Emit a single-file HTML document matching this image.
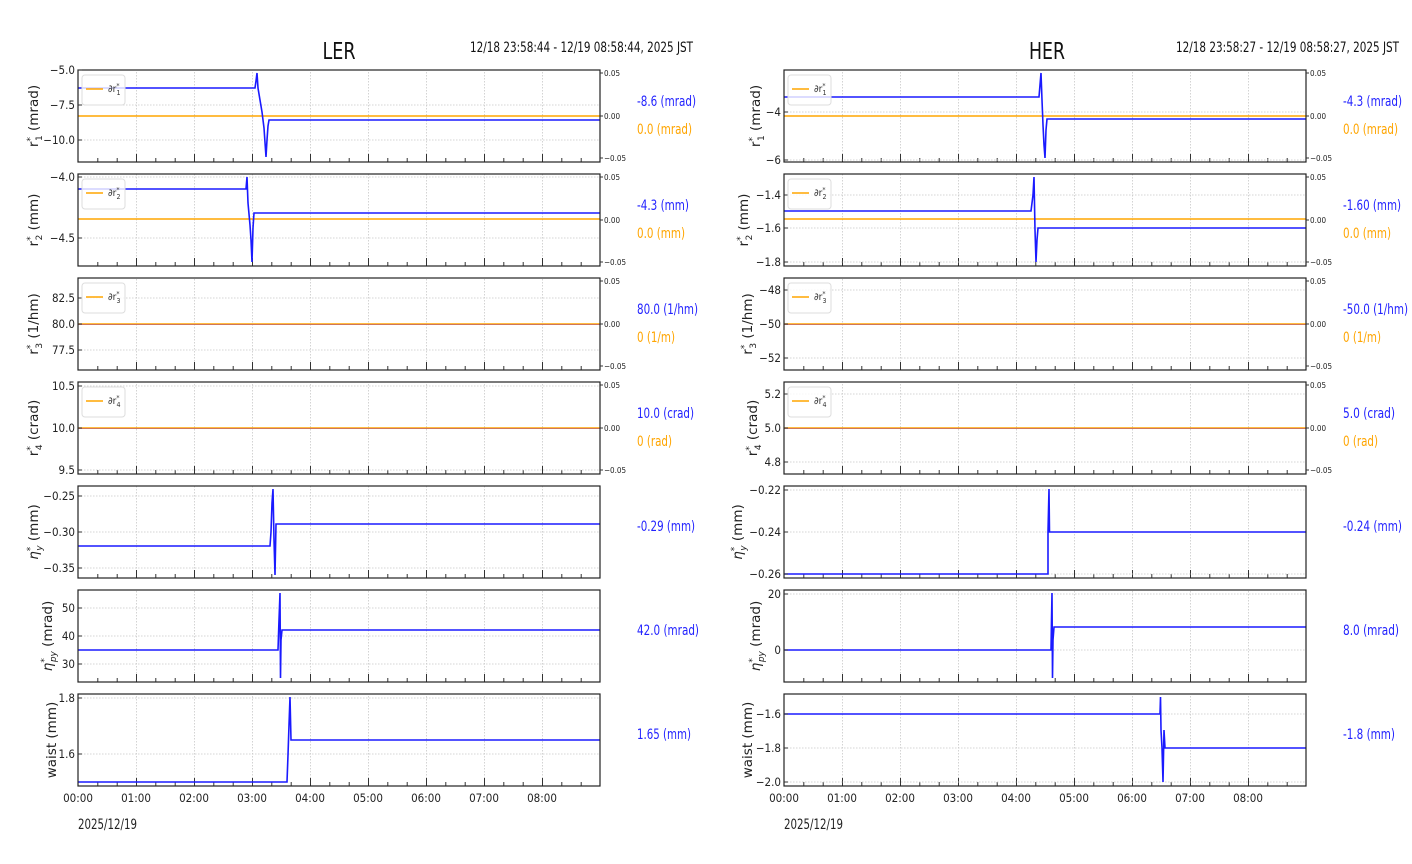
<!DOCTYPE html>
<html><head><meta charset="utf-8"><style>
html,body{margin:0;padding:0;background:#fff;}
svg{display:block;}
.t{font-family:"DejaVu Sans Condensed","DejaVu Sans","Liberation Sans",sans-serif;font-stretch:condensed;fill:#222;}
.tk{font-size:11.5px;}
.tk9{font-size:8px;}
.yl{font-family:"DejaVu Sans","Liberation Sans",sans-serif;font-size:13.5px;fill:#222;}
.vb{font-size:14px;fill:#2222ff;}
.vo{font-size:14px;fill:#ffa500;}
.ax{fill:none;stroke:#222;stroke-width:1.2;}
.g{stroke:#c8c8c8;stroke-width:0.8;stroke-dasharray:1.5,1.5;}
.b{fill:none;stroke:#1a1aff;stroke-width:1.6;}
.o{stroke:#ffa500;stroke-width:1.4;}
.tm{stroke:#333;stroke-width:1;}
.lg{fill:#fff;fill-opacity:0.8;stroke:#ddd;stroke-width:1;}
.ls{font-size:10px;fill:#333;}
</style></head><body>
<svg width="1412" height="864" viewBox="0 0 1412 864" xmlns="http://www.w3.org/2000/svg">
<defs>
<pattern id="vgL" patternUnits="userSpaceOnUse" x="78" y="0" width="58" height="864"><line x1="0.5" y1="0" x2="0.5" y2="864" class="g"/></pattern>
<pattern id="vgR" patternUnits="userSpaceOnUse" x="784" y="0" width="58" height="864"><line x1="0.5" y1="0" x2="0.5" y2="864" class="g"/></pattern>
<pattern id="tkL" patternUnits="userSpaceOnUse" x="78" y="0" width="58" height="864"><line x1="0.5" y1="856" x2="0.5" y2="864" class="tm"/><line x1="19.8" y1="860" x2="19.8" y2="864" class="tm"/><line x1="39.2" y1="860" x2="39.2" y2="864" class="tm"/></pattern>
<pattern id="tkR" patternUnits="userSpaceOnUse" x="784" y="0" width="58" height="864"><line x1="0.5" y1="856" x2="0.5" y2="864" class="tm"/><line x1="19.8" y1="860" x2="19.8" y2="864" class="tm"/><line x1="39.2" y1="860" x2="39.2" y2="864" class="tm"/></pattern>
</defs>

<!-- Titles -->
<text x="339" y="59" text-anchor="middle" class="t" style="font-size:23px;fill:#111" textLength="33" lengthAdjust="spacingAndGlyphs">LER</text>
<text x="470" y="52" class="t" style="font-size:14px;fill:#111" textLength="223" lengthAdjust="spacingAndGlyphs">12/18 23:58:44 - 12/19 08:58:44, 2025 JST</text>
<text x="1047" y="59" text-anchor="middle" class="t" style="font-size:23px;fill:#111" textLength="36" lengthAdjust="spacingAndGlyphs">HER</text>
<text x="1176" y="52" class="t" style="font-size:14px;fill:#111" textLength="223" lengthAdjust="spacingAndGlyphs">12/18 23:58:27 - 12/19 08:58:27, 2025 JST</text>

<!-- vertical grids -->
<g>
<rect x="79" y="70" width="520" height="92" fill="url(#vgL)"/>
<rect x="79" y="174" width="520" height="92" fill="url(#vgL)"/>
<rect x="79" y="278" width="520" height="92" fill="url(#vgL)"/>
<rect x="79" y="382" width="520" height="92" fill="url(#vgL)"/>
<rect x="79" y="486" width="520" height="92" fill="url(#vgL)"/>
<rect x="79" y="590" width="520" height="92" fill="url(#vgL)"/>
<rect x="79" y="694" width="520" height="92" fill="url(#vgL)"/>
<rect x="785" y="70" width="520" height="92" fill="url(#vgR)"/>
<rect x="785" y="174" width="520" height="92" fill="url(#vgR)"/>
<rect x="785" y="278" width="520" height="92" fill="url(#vgR)"/>
<rect x="785" y="382" width="520" height="92" fill="url(#vgR)"/>
<rect x="785" y="486" width="520" height="92" fill="url(#vgR)"/>
<rect x="785" y="590" width="520" height="92" fill="url(#vgR)"/>
<rect x="785" y="694" width="520" height="92" fill="url(#vgR)"/>
</g>
<!-- bottom ticks -->
<g>
<svg x="0" y="154" width="1412" height="8" viewBox="0 856 1412 8"><rect x="79" y="856" width="520" height="8" fill="url(#tkL)"/><rect x="785" y="856" width="520" height="8" fill="url(#tkR)"/></svg>
<svg x="0" y="258" width="1412" height="8" viewBox="0 856 1412 8"><rect x="79" y="856" width="520" height="8" fill="url(#tkL)"/><rect x="785" y="856" width="520" height="8" fill="url(#tkR)"/></svg>
<svg x="0" y="362" width="1412" height="8" viewBox="0 856 1412 8"><rect x="79" y="856" width="520" height="8" fill="url(#tkL)"/><rect x="785" y="856" width="520" height="8" fill="url(#tkR)"/></svg>
<svg x="0" y="466" width="1412" height="8" viewBox="0 856 1412 8"><rect x="79" y="856" width="520" height="8" fill="url(#tkL)"/><rect x="785" y="856" width="520" height="8" fill="url(#tkR)"/></svg>
<svg x="0" y="570" width="1412" height="8" viewBox="0 856 1412 8"><rect x="79" y="856" width="520" height="8" fill="url(#tkL)"/><rect x="785" y="856" width="520" height="8" fill="url(#tkR)"/></svg>
<svg x="0" y="674" width="1412" height="8" viewBox="0 856 1412 8"><rect x="79" y="856" width="520" height="8" fill="url(#tkL)"/><rect x="785" y="856" width="520" height="8" fill="url(#tkR)"/></svg>
<svg x="0" y="778" width="1412" height="8" viewBox="0 856 1412 8"><rect x="79" y="856" width="520" height="8" fill="url(#tkL)"/><rect x="785" y="856" width="520" height="8" fill="url(#tkR)"/></svg>
</g>

<!-- horizontal grids -->
<g class="g">
<line x1="78" x2="600" y1="105" y2="105"/><line x1="78" x2="600" y1="140" y2="140"/>
<line x1="78" x2="600" y1="238" y2="238"/><line x1="78" x2="600" y1="177" y2="177"/>
<line x1="78" x2="600" y1="298" y2="298"/><line x1="78" x2="600" y1="350" y2="350"/>
<line x1="78" x2="600" y1="386" y2="386"/><line x1="78" x2="600" y1="470" y2="470"/>
<line x1="78" x2="600" y1="496" y2="496"/><line x1="78" x2="600" y1="532" y2="532"/><line x1="78" x2="600" y1="568" y2="568"/>
<line x1="78" x2="600" y1="608" y2="608"/><line x1="78" x2="600" y1="636" y2="636"/><line x1="78" x2="600" y1="664" y2="664"/>
<line x1="78" x2="600" y1="698" y2="698"/><line x1="78" x2="600" y1="754" y2="754"/>
<line x1="784" x2="1306" y1="112" y2="112"/><line x1="784" x2="1306" y1="160" y2="160"/>
<line x1="784" x2="1306" y1="195" y2="195"/><line x1="784" x2="1306" y1="228" y2="228"/><line x1="784" x2="1306" y1="262" y2="262"/>
<line x1="784" x2="1306" y1="290" y2="290"/><line x1="784" x2="1306" y1="358" y2="358"/>
<line x1="784" x2="1306" y1="394" y2="394"/><line x1="784" x2="1306" y1="462" y2="462"/>
<line x1="784" x2="1306" y1="490" y2="490"/><line x1="784" x2="1306" y1="532" y2="532"/><line x1="784" x2="1306" y1="574" y2="574"/>
<line x1="784" x2="1306" y1="594" y2="594"/><line x1="784" x2="1306" y1="650" y2="650"/>
<line x1="784" x2="1306" y1="714" y2="714"/><line x1="784" x2="1306" y1="748" y2="748"/><line x1="784" x2="1306" y1="782" y2="782"/>
</g>

<!-- data LEFT -->
<line x1="78" x2="600" y1="116" y2="116" class="o"/>
<polyline class="b" points="78,88 255,88 256,81 257,73 258,88 260,100 262,112 264,128 266,157 267,140 268,126 269,120 600,120"/>
<line x1="78" x2="600" y1="219" y2="219" class="o"/>
<polyline class="b" points="78,189 246,189 247,177 248,203 250,225 251,240 252,262 253,228 254,213 600,213"/>
<line x1="78" x2="600" y1="324" y2="324" class="o"/><line x1="78" x2="600" y1="324.5" y2="324.5" stroke="#c06060" stroke-width="0.8"/>
<line x1="78" x2="600" y1="428" y2="428" class="o"/><line x1="78" x2="600" y1="428.5" y2="428.5" stroke="#c06060" stroke-width="0.8"/>
<polyline class="b" points="78,546 270,546 271,532 272,503 273,489 274,540 275,575 276,524 600,524"/>
<polyline class="b" points="78,650 278,650 279,620 280,593 280.5,678 281,640 282,630 600,630"/>
<polyline class="b" points="78,782 287,782 288,755 289,725 290,697 291,740 600,740"/>

<!-- data RIGHT -->
<line x1="784" x2="1306" y1="116" y2="116" class="o"/>
<polyline class="b" points="784,97 1039,97 1040,85 1041,73 1042,100 1043,125 1044,145 1045,158 1046,130 1047,119 1306,119"/>
<line x1="784" x2="1306" y1="219" y2="219" class="o"/>
<polyline class="b" points="784,211 1031,211 1033,195 1034,177 1035,230 1036,262 1037,240 1038,228 1306,228"/>
<line x1="784" x2="1306" y1="324" y2="324" class="o"/><line x1="784" x2="1306" y1="324.5" y2="324.5" stroke="#c06060" stroke-width="0.8"/>
<line x1="784" x2="1306" y1="428" y2="428" class="o"/><line x1="784" x2="1306" y1="428.5" y2="428.5" stroke="#c06060" stroke-width="0.8"/>
<polyline class="b" points="784,574 1048,574 1048,532 1049,489 1049.5,532 1306,532"/>
<polyline class="b" points="784,650 1051,650 1051.5,620 1052,593 1052.5,678 1053,640 1054,627 1306,627"/>
<polyline class="b" points="784,714 1160,714 1160.5,697 1161,730 1162,748 1163,782 1164,730 1165,748 1306,748"/>

<!-- axes frames -->
<g class="ax">
<rect x="78" y="70" width="522" height="92"/><rect x="78" y="174" width="522" height="92"/><rect x="78" y="278" width="522" height="92"/>
<rect x="78" y="382" width="522" height="92"/><rect x="78" y="486" width="522" height="92"/><rect x="78" y="590" width="522" height="92"/><rect x="78" y="694" width="522" height="92"/>
<rect x="784" y="70" width="522" height="92"/><rect x="784" y="174" width="522" height="92"/><rect x="784" y="278" width="522" height="92"/>
<rect x="784" y="382" width="522" height="92"/><rect x="784" y="486" width="522" height="92"/><rect x="784" y="590" width="522" height="92"/><rect x="784" y="694" width="522" height="92"/>
</g>

<g class="tm">
<path d="M78 70h4M78 105h4M78 140h4M78 177h4M78 238h4M78 298h4M78 324h4M78 350h4M78 386h4M78 428h4M78 470h4M78 496h4M78 532h4M78 568h4M78 608h4M78 636h4M78 664h4M78 698h4M78 754h4"/>
<path d="M784 112h4M784 160h4M784 195h4M784 228h4M784 262h4M784 290h4M784 324h4M784 358h4M784 394h4M784 428h4M784 462h4M784 490h4M784 532h4M784 574h4M784 594h4M784 650h4M784 714h4M784 748h4M784 782h4"/>
<path d="M600 73h3M600 116h3M600 158h3M600 177h3M600 220h3M600 262h3M600 281h3M600 324h3M600 366h3M600 385h3M600 428h3M600 470h3"/>
<path d="M1306 73h3M1306 116h3M1306 158h3M1306 177h3M1306 220h3M1306 262h3M1306 281h3M1306 324h3M1306 366h3M1306 385h3M1306 428h3M1306 470h3"/>
</g>

<!-- y tick labels -->
<g class="t tk" text-anchor="end">
<text x="75" y="74">−5.0</text><text x="75" y="109">−7.5</text><text x="75" y="144">−10.0</text>
<text x="75" y="181">−4.0</text><text x="75" y="242">−4.5</text>
<text x="75" y="302">82.5</text><text x="75" y="328">80.0</text><text x="75" y="354">77.5</text>
<text x="75" y="390">10.5</text><text x="75" y="432">10.0</text><text x="75" y="474">9.5</text>
<text x="75" y="500">−0.25</text><text x="75" y="536">−0.30</text><text x="75" y="572">−0.35</text>
<text x="75" y="612">50</text><text x="75" y="640">40</text><text x="75" y="668">30</text>
<text x="75" y="702">1.8</text><text x="75" y="758">1.6</text>
</g>
<g class="t tk" text-anchor="end">
<text x="781" y="116">−4</text><text x="781" y="164">−6</text>
<text x="781" y="199">−1.4</text><text x="781" y="232">−1.6</text><text x="781" y="266">−1.8</text>
<text x="781" y="294">−48</text><text x="781" y="328">−50</text><text x="781" y="362">−52</text>
<text x="781" y="398">5.2</text><text x="781" y="432">5.0</text><text x="781" y="466">4.8</text>
<text x="781" y="494">−0.22</text><text x="781" y="536">−0.24</text><text x="781" y="578">−0.26</text>
<text x="781" y="598">20</text><text x="781" y="654">0</text>
<text x="781" y="718">−1.6</text><text x="781" y="752">−1.8</text><text x="781" y="786">−2.0</text>
</g>
<g class="t tk9">
<text x="604" y="76">0.05</text><text x="604" y="119">0.00</text><text x="604" y="161">−0.05</text>
<text x="604" y="180">0.05</text><text x="604" y="223">0.00</text><text x="604" y="265">−0.05</text>
<text x="604" y="284">0.05</text><text x="604" y="327">0.00</text><text x="604" y="369">−0.05</text>
<text x="604" y="388">0.05</text><text x="604" y="431">0.00</text><text x="604" y="473">−0.05</text>
<text x="1310" y="76">0.05</text><text x="1310" y="119">0.00</text><text x="1310" y="161">−0.05</text>
<text x="1310" y="180">0.05</text><text x="1310" y="223">0.00</text><text x="1310" y="265">−0.05</text>
<text x="1310" y="284">0.05</text><text x="1310" y="327">0.00</text><text x="1310" y="369">−0.05</text>
<text x="1310" y="388">0.05</text><text x="1310" y="431">0.00</text><text x="1310" y="473">−0.05</text>
</g>

<!-- x tick labels -->
<g class="t tk" text-anchor="middle">
<text x="78" y="802">00:00</text><text x="136" y="802">01:00</text><text x="194" y="802">02:00</text><text x="252" y="802">03:00</text><text x="310" y="802">04:00</text><text x="368" y="802">05:00</text><text x="426" y="802">06:00</text><text x="484" y="802">07:00</text><text x="542" y="802">08:00</text>
<text x="784" y="802">00:00</text><text x="842" y="802">01:00</text><text x="900" y="802">02:00</text><text x="958" y="802">03:00</text><text x="1016" y="802">04:00</text><text x="1074" y="802">05:00</text><text x="1132" y="802">06:00</text><text x="1190" y="802">07:00</text><text x="1248" y="802">08:00</text>
</g>
<text x="78" y="829" class="t" style="font-size:14px" textLength="59" lengthAdjust="spacingAndGlyphs">2025/12/19</text>
<text x="784" y="829" class="t" style="font-size:14px" textLength="59" lengthAdjust="spacingAndGlyphs">2025/12/19</text>

<!-- y axis labels -->
<g class="yl" text-anchor="middle">
<text transform="translate(38,116) rotate(-90)">r<tspan dy="-5" font-size="9">*</tspan><tspan dy="9" dx="-4" font-size="9">1</tspan><tspan dy="-4"> (mrad)</tspan></text>
<text transform="translate(38,220) rotate(-90)">r<tspan dy="-5" font-size="9">*</tspan><tspan dy="9" dx="-4" font-size="9">2</tspan><tspan dy="-4"> (mm)</tspan></text>
<text transform="translate(38,324) rotate(-90)">r<tspan dy="-5" font-size="9">*</tspan><tspan dy="9" dx="-4" font-size="9">3</tspan><tspan dy="-4"> (1/hm)</tspan></text>
<text transform="translate(38,428) rotate(-90)">r<tspan dy="-5" font-size="9">*</tspan><tspan dy="9" dx="-4" font-size="9">4</tspan><tspan dy="-4"> (crad)</tspan></text>
<text transform="translate(38,532) rotate(-90)"><tspan font-style="italic">η</tspan><tspan dy="-5" font-size="9">*</tspan><tspan dy="9" dx="-4" font-size="9" font-style="italic">y</tspan><tspan dy="-4"> (mm)</tspan></text>
<text transform="translate(52,636) rotate(-90)"><tspan font-style="italic">η</tspan><tspan dy="-5" font-size="9">*</tspan><tspan dy="9" dx="-4" font-size="9" font-style="italic">py</tspan><tspan dy="-4"> (mrad)</tspan></text>
<text transform="translate(56,740) rotate(-90)">waist (mm)</text>
</g>
<g class="yl" text-anchor="middle">
<text transform="translate(760,116) rotate(-90)">r<tspan dy="-5" font-size="9">*</tspan><tspan dy="9" dx="-4" font-size="9">1</tspan><tspan dy="-4"> (mrad)</tspan></text>
<text transform="translate(748,220) rotate(-90)">r<tspan dy="-5" font-size="9">*</tspan><tspan dy="9" dx="-4" font-size="9">2</tspan><tspan dy="-4"> (mm)</tspan></text>
<text transform="translate(752,324) rotate(-90)">r<tspan dy="-5" font-size="9">*</tspan><tspan dy="9" dx="-4" font-size="9">3</tspan><tspan dy="-4"> (1/hm)</tspan></text>
<text transform="translate(757,428) rotate(-90)">r<tspan dy="-5" font-size="9">*</tspan><tspan dy="9" dx="-4" font-size="9">4</tspan><tspan dy="-4"> (crad)</tspan></text>
<text transform="translate(742,532) rotate(-90)"><tspan font-style="italic">η</tspan><tspan dy="-5" font-size="9">*</tspan><tspan dy="9" dx="-4" font-size="9" font-style="italic">y</tspan><tspan dy="-4"> (mm)</tspan></text>
<text transform="translate(760,636) rotate(-90)"><tspan font-style="italic">η</tspan><tspan dy="-5" font-size="9">*</tspan><tspan dy="9" dx="-4" font-size="9" font-style="italic">py</tspan><tspan dy="-4"> (mrad)</tspan></text>
<text transform="translate(752,740) rotate(-90)">waist (mm)</text>
</g>

<!-- legends -->
<g>
<rect class="lg" x="82" y="75" width="43" height="30" rx="3"/><line x1="86" x2="103" y1="89" y2="89" class="o"/>
<text class="t ls" x="108" y="92">∂r<tspan dy="-4" font-size="7">*</tspan><tspan dy="7" dx="-3" font-size="7">1</tspan></text>
<rect class="lg" x="82" y="179" width="43" height="30" rx="3"/><line x1="86" x2="103" y1="193" y2="193" class="o"/>
<text class="t ls" x="108" y="196">∂r<tspan dy="-4" font-size="7">*</tspan><tspan dy="7" dx="-3" font-size="7">2</tspan></text>
<rect class="lg" x="82" y="283" width="43" height="30" rx="3"/><line x1="86" x2="103" y1="297" y2="297" class="o"/>
<text class="t ls" x="108" y="300">∂r<tspan dy="-4" font-size="7">*</tspan><tspan dy="7" dx="-3" font-size="7">3</tspan></text>
<rect class="lg" x="82" y="387" width="43" height="30" rx="3"/><line x1="86" x2="103" y1="401" y2="401" class="o"/>
<text class="t ls" x="108" y="404">∂r<tspan dy="-4" font-size="7">*</tspan><tspan dy="7" dx="-3" font-size="7">4</tspan></text>
<rect class="lg" x="788" y="75" width="43" height="30" rx="3"/><line x1="792" x2="809" y1="89" y2="89" class="o"/>
<text class="t ls" x="814" y="92">∂r<tspan dy="-4" font-size="7">*</tspan><tspan dy="7" dx="-3" font-size="7">1</tspan></text>
<rect class="lg" x="788" y="179" width="43" height="30" rx="3"/><line x1="792" x2="809" y1="193" y2="193" class="o"/>
<text class="t ls" x="814" y="196">∂r<tspan dy="-4" font-size="7">*</tspan><tspan dy="7" dx="-3" font-size="7">2</tspan></text>
<rect class="lg" x="788" y="283" width="43" height="30" rx="3"/><line x1="792" x2="809" y1="297" y2="297" class="o"/>
<text class="t ls" x="814" y="300">∂r<tspan dy="-4" font-size="7">*</tspan><tspan dy="7" dx="-3" font-size="7">3</tspan></text>
<rect class="lg" x="788" y="387" width="43" height="30" rx="3"/><line x1="792" x2="809" y1="401" y2="401" class="o"/>
<text class="t ls" x="814" y="404">∂r<tspan dy="-4" font-size="7">*</tspan><tspan dy="7" dx="-3" font-size="7">4</tspan></text>
</g>

<!-- value labels -->
<g class="t" lengthAdjust="spacingAndGlyphs">
<text class="vb" x="637" y="106" textLength="59" lengthAdjust="spacingAndGlyphs">-8.6 (mrad)</text><text class="vo" x="637" y="134" textLength="55" lengthAdjust="spacingAndGlyphs">0.0 (mrad)</text>
<text class="vb" x="637" y="210" textLength="52" lengthAdjust="spacingAndGlyphs">-4.3 (mm)</text><text class="vo" x="637" y="238" textLength="48" lengthAdjust="spacingAndGlyphs">0.0 (mm)</text>
<text class="vb" x="637" y="314" textLength="61" lengthAdjust="spacingAndGlyphs">80.0 (1/hm)</text><text class="vo" x="637" y="342" textLength="38" lengthAdjust="spacingAndGlyphs">0 (1/m)</text>
<text class="vb" x="637" y="418" textLength="57" lengthAdjust="spacingAndGlyphs">10.0 (crad)</text><text class="vo" x="637" y="446" textLength="35" lengthAdjust="spacingAndGlyphs">0 (rad)</text>
<text class="vb" x="637" y="531" textLength="58" lengthAdjust="spacingAndGlyphs">-0.29 (mm)</text>
<text class="vb" x="637" y="635" textLength="62" lengthAdjust="spacingAndGlyphs">42.0 (mrad)</text>
<text class="vb" x="637" y="739" textLength="54" lengthAdjust="spacingAndGlyphs">1.65 (mm)</text>
<text class="vb" x="1343" y="106" textLength="59" lengthAdjust="spacingAndGlyphs">-4.3 (mrad)</text><text class="vo" x="1343" y="134" textLength="55" lengthAdjust="spacingAndGlyphs">0.0 (mrad)</text>
<text class="vb" x="1343" y="210" textLength="58" lengthAdjust="spacingAndGlyphs">-1.60 (mm)</text><text class="vo" x="1343" y="238" textLength="48" lengthAdjust="spacingAndGlyphs">0.0 (mm)</text>
<text class="vb" x="1343" y="314" textLength="65" lengthAdjust="spacingAndGlyphs">-50.0 (1/hm)</text><text class="vo" x="1343" y="342" textLength="38" lengthAdjust="spacingAndGlyphs">0 (1/m)</text>
<text class="vb" x="1343" y="418" textLength="52" lengthAdjust="spacingAndGlyphs">5.0 (crad)</text><text class="vo" x="1343" y="446" textLength="35" lengthAdjust="spacingAndGlyphs">0 (rad)</text>
<text class="vb" x="1343" y="531" textLength="59" lengthAdjust="spacingAndGlyphs">-0.24 (mm)</text>
<text class="vb" x="1343" y="635" textLength="56" lengthAdjust="spacingAndGlyphs">8.0 (mrad)</text>
<text class="vb" x="1343" y="739" textLength="52" lengthAdjust="spacingAndGlyphs">-1.8 (mm)</text>
</g>
</svg>
</body></html>
